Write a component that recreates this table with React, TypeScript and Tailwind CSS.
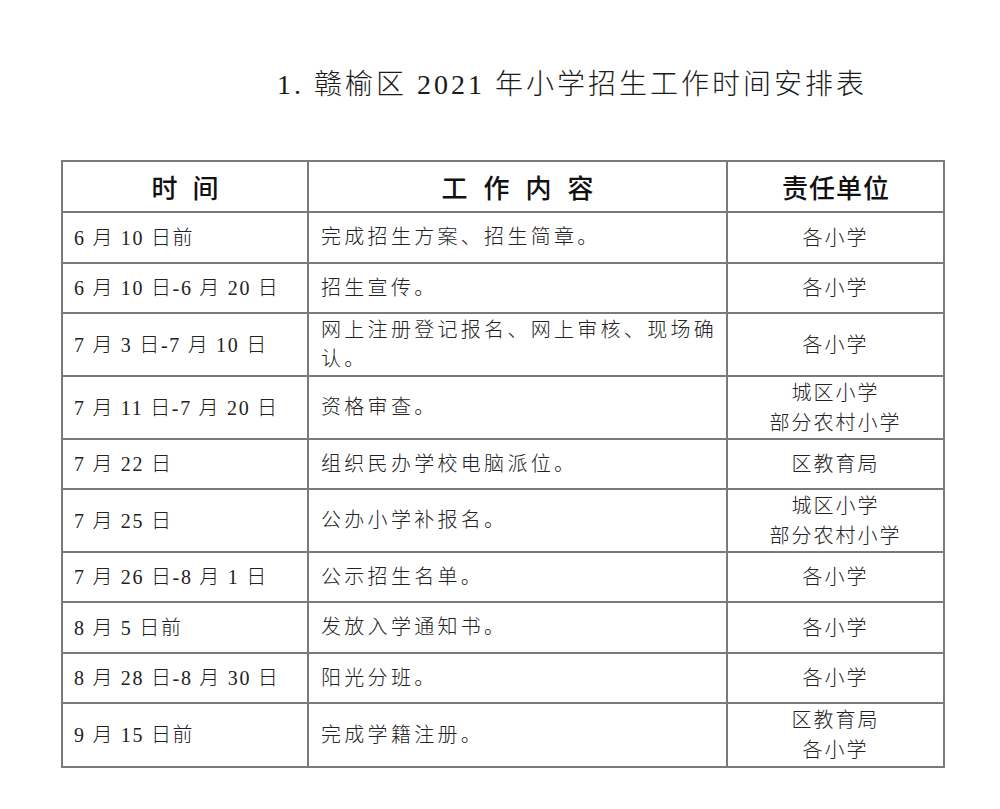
import React from "react";

type Row = { time: string; work: React.ReactNode; unit: string[]; h: string };

const rows: Row[] = [
  { time: "6 月 10 日前", work: "完成招生方案、招生简章。", unit: ["各小学"], h: "h-[51px]" },
  { time: "6 月 10 日-6 月 20 日", work: "招生宣传。", unit: ["各小学"], h: "h-[50px]" },
  {
    time: "7 月 3 日-7 月 10 日",
    work: (
      <>
        网上注册登记报名、网上审核、现场确
        <br />
        认。
      </>
    ),
    unit: ["各小学"],
    h: "h-[63px]",
  },
  { time: "7 月 11 日-7 月 20 日", work: "资格审查。", unit: ["城区小学", "部分农村小学"], h: "h-[63px]" },
  { time: "7 月 22 日", work: "组织民办学校电脑派位。", unit: ["区教育局"], h: "h-[50px]" },
  { time: "7 月 25 日", work: "公办小学补报名。", unit: ["城区小学", "部分农村小学"], h: "h-[63px]" },
  { time: "7 月 26 日-8 月 1 日", work: "公示招生名单。", unit: ["各小学"], h: "h-[50px]" },
  { time: "8 月 5 日前", work: "发放入学通知书。", unit: ["各小学"], h: "h-[51px]" },
  { time: "8 月 28 日-8 月 30 日", work: "阳光分班。", unit: ["各小学"], h: "h-[50px]" },
  { time: "9 月 15 日前", work: "完成学籍注册。", unit: ["区教育局", "各小学"], h: "h-[64px]" },
];

const cell = "border-2 border-[#7a7a7a] align-middle";

// header label with even gaps between its characters
function Spaced({ text, gap }: { text: string; gap: string }) {
  return (
    <div className={`flex justify-center ${gap}`}>
      {text.split("").map((c, i) => (
        <span key={i}>{c}</span>
      ))}
    </div>
  );
}

export default function App() {
  return (
    <div className="w-[1000px] h-[809px] bg-white overflow-hidden">
      {/* Title */}
      <div className="pt-[67px] pl-[277px] h-[160px]">
        <h1 className="text-[28px] leading-[36px] tracking-[3px] text-[#1a1a1a] font-['Liberation_Serif','Noto_Sans_CJK_SC',serif] font-light whitespace-nowrap">
          1. 赣榆区 2021 年小学招生工作时间安排表
        </h1>
      </div>

      {/* Schedule table */}
      <table className="ml-[61px] w-[882px] border-collapse table-fixed">
        <colgroup>
          <col className="w-[246px]" />
          <col className="w-[419px]" />
          <col className="w-[217px]" />
        </colgroup>
        <thead>
          <tr className="h-[51px] font-['Noto_Sans_CJK_SC',sans-serif] text-[26px] leading-[32px] text-[#111]">
            <th className={`${cell} font-medium`}>
              <Spaced text="时间" gap="gap-[15px]" />
            </th>
            <th className={`${cell} font-medium`}>
              <Spaced text="工作内容" gap="gap-[16px]" />
            </th>
            <th className={`${cell} font-medium`}>
              <Spaced text="责任单位" gap="gap-[1px]" />
            </th>
          </tr>
        </thead>
        <tbody className="font-['Liberation_Serif','Noto_Sans_CJK_SC',serif] font-light text-[20px] text-[#222]">
          {rows.map((r, i) => (
            <tr key={i} className={r.h}>
              <td className={`${cell} pl-[11px] tracking-[1.7px] whitespace-nowrap`}>{r.time}</td>
              <td className={`${cell} pl-[12px] leading-[29px] tracking-[3.3px]`}>{r.work}</td>
              <td className={`${cell} text-center leading-[30px] tracking-[2px]`}>
                {r.unit.map((u, j) => (
                  <div key={j}>{u}</div>
                ))}
              </td>
            </tr>
          ))}
        </tbody>
      </table>
    </div>
  );
}
